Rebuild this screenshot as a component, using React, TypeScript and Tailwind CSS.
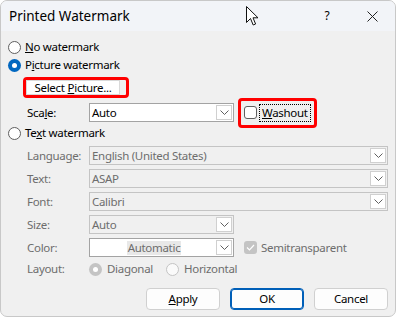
import clsx from "clsx";

const font = { fontFamily: '"Noto Sans", "Segoe UI", sans-serif' };

function Chevron({ color = "#606060" }: { color?: string }) {
  return (
    <svg width="9" height="5" viewBox="0 0 9 5">
      <path d="M0.5 0.5 L4.5 4.5 L8.5 0.5" fill="none" stroke={color} strokeWidth="1" />
    </svg>
  );
}

function Radio({ checked, disabled }: { checked?: boolean; disabled?: boolean }) {
  if (checked) {
    return (
      <span
        className={clsx(
          "flex h-[13px] w-[13px] shrink-0 items-center justify-center rounded-full",
          disabled ? "bg-[#c4c4c4]" : "bg-[#0067c0]"
        )}
      >
        <span className="h-[5px] w-[5px] rounded-full bg-white" />
      </span>
    );
  }
  return (
    <span
      className={clsx(
        "block h-[13px] w-[13px] shrink-0 rounded-full border",
        disabled ? "border-[#c4c4c4] bg-[#fafafa]" : "border-[#5f5f5f] bg-white"
      )}
    />
  );
}

function Combo({
  value,
  disabled,
  white,
  center,
  className,
}: {
  value: string;
  disabled?: boolean;
  white?: boolean;
  center?: boolean;
  className?: string;
}) {
  return (
    <div
      className={clsx(
        "flex h-[19px] items-stretch border",
        white || !disabled ? "border-[#a3a3a3] bg-white" : "border-[#c4c4c4] bg-[#f0f0f0]",
        className
      )}
    >
      <div
        className={clsx(
          "flex flex-1 items-center pl-[2px]",
          center && "justify-center",
          disabled ? "text-[#6d6d6d]" : "text-black"
        )}
      >
        {center ? <span className="bg-[#e8e8e8] px-[1px] leading-[14px]">{value}</span> : value}
      </div>
      <div className="my-[1px] mr-[1px] flex w-[16px] items-center justify-center border border-[#d0d0d0] bg-white">
        <Chevron />
      </div>
    </div>
  );
}

function Label({ children, disabled }: { children: React.ReactNode; disabled?: boolean }) {
  return (
    <span className={clsx("w-[62px] shrink-0", disabled ? "text-[#6d6d6d]" : "text-black")}>
      {children}
    </span>
  );
}

function Button({ children, primary }: { children: React.ReactNode; primary?: boolean }) {
  return (
    <div
      className={clsx(
        "flex h-[22px] w-[74px] items-center justify-center rounded-[4px] border bg-[#fdfdfd] text-black",
        primary ? "border-[#005fb8] shadow-[inset_0_0_0_1px_#005fb8]" : "border-[#d0d0d0]"
      )}
    >
      {children}
    </div>
  );
}

export default function App() {
  return (
    <div
      style={font}
      className="relative h-[317px] w-[396px] overflow-hidden rounded-[7px] border border-[#c8c8c8] bg-[#f0f0f0] text-[11.5px] leading-[16px] tracking-[-0.3px] text-black"
    >
      {/* title bar */}
      <div className="flex h-[30px] items-center bg-[#f2f4f8] pl-[8px]">
        <span className="flex-1 text-[13.5px] tracking-normal">Printed Watermark</span>
        <span className="w-[20px] text-center text-[12px]">?</span>
        <span className="ml-[28px] mr-[16px] flex w-[14px] items-center justify-center">
          <svg width="11" height="11" viewBox="0 0 11 11">
            <path d="M0.5 0.5 L10.5 10.5 M10.5 0.5 L0.5 10.5" stroke="#222" strokeWidth="1" />
          </svg>
        </span>
      </div>

      {/* mouse cursor */}
      <svg className="absolute left-[245px] top-[5px]" width="13" height="21" viewBox="0 0 13 21">
        <path
          d="M0.5 0.5 L0.5 16.5 L4.5 12.5 L7.2 19 L9.6 18 L7 11.8 L12 11.8 Z"
          fill="white"
          stroke="#111"
          strokeWidth="1"
          strokeLinejoin="round"
        />
      </svg>

      <div className="flex flex-col pl-[7px] pr-[7px]">
        <div className="mt-[7px] flex h-[18px] items-center gap-[4px]">
          <Radio />
          <span>
            <u>N</u>o watermark
          </span>
        </div>
        <div className="flex h-[18px] items-center gap-[4px]">
          <Radio checked />
          <span>
            P<u>i</u>cture watermark
          </span>
        </div>

        <div className="mt-[3px] ml-[15px] flex h-[21px] w-[106px] items-center rounded-[4px] border-[3px] border-[#ff0000]">
          <div className="flex h-[15px] w-[94px] items-center justify-center border border-[#d9d9d9] bg-white">
            Select <u className="ml-[3px]">P</u>icture...
          </div>
        </div>

        <div className="mt-[5px] ml-[19px] flex h-[19px] items-center">
          <Label>
            Sca<u>l</u>e:
          </Label>
          <Combo value="Auto" className="w-[145px]" />
          <div className="ml-[4px] flex h-[30px] w-[79px] items-center rounded-[4px] border-[3px] border-[#ff0000] pl-[3px]">
            <span className="h-[13px] w-[13px] shrink-0 rounded-[3px] border border-[#5f5f5f] bg-white" />
            <span className="ml-[2px] border border-dotted border-black px-[2px] leading-[16px]">
              <u>W</u>ashout
            </span>
          </div>
        </div>

        <div className="mt-[2px] flex h-[18px] items-center gap-[4px]">
          <Radio />
          <span>
            Te<u>x</u>t watermark
          </span>
        </div>

        <div className="mt-[4px] ml-[19px] flex h-[19px] items-center">
          <Label disabled>Language:</Label>
          <Combo value="English (United States)" disabled className="flex-1" />
        </div>
        <div className="mt-[4px] ml-[19px] flex h-[19px] items-center">
          <Label disabled>Text:</Label>
          <Combo value="ASAP" disabled className="flex-1" />
        </div>
        <div className="mt-[4px] ml-[19px] flex h-[19px] items-center">
          <Label disabled>Font:</Label>
          <Combo value="Calibri" disabled className="flex-1" />
        </div>
        <div className="mt-[4px] ml-[19px] flex h-[19px] items-center">
          <Label disabled>Size:</Label>
          <Combo value="Auto" disabled className="w-[145px]" />
        </div>
        <div className="mt-[4px] ml-[19px] flex h-[19px] items-center">
          <Label disabled>Color:</Label>
          <Combo value="Automatic" disabled white center className="w-[145px]" />
          <span className="ml-[10px] flex h-[13px] w-[13px] items-center justify-center rounded-[3px] bg-[#c4c4c4]">
            <svg width="9" height="7" viewBox="0 0 9 7">
              <path d="M1 3.5 L3.5 6 L8 1" fill="none" stroke="white" strokeWidth="1.2" />
            </svg>
          </span>
          <span className="ml-[4px] text-[#6d6d6d]">Semitransparent</span>
        </div>
        <div className="mt-[3px] ml-[19px] flex h-[18px] items-center text-[#6d6d6d]">
          <Label disabled>Layout:</Label>
          <Radio checked disabled />
          <span className="ml-[5px] w-[59px]">Diagonal</span>
          <Radio disabled />
          <span className="ml-[5px]">Horizontal</span>
        </div>

        <div className="mt-[10px] flex justify-end gap-[10px]">
          <Button>
            <u>A</u>pply
          </Button>
          <Button primary>OK</Button>
          <Button>Cancel</Button>
        </div>
      </div>
    </div>
  );
}
